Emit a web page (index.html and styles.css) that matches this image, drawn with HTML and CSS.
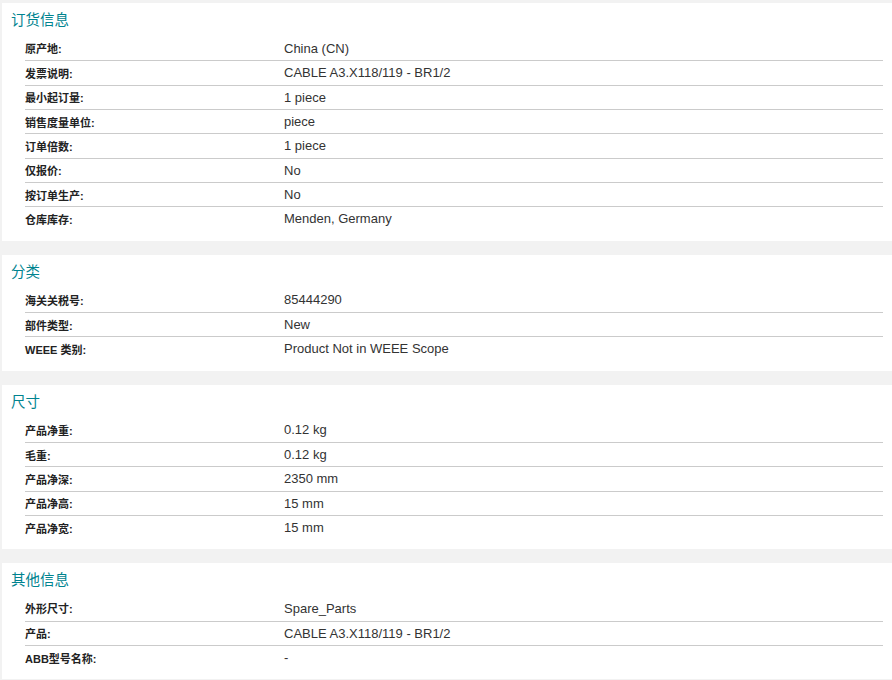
FILE: index.html
```html
<!DOCTYPE html>
<html lang="zh">
<head>
<meta charset="utf-8">
<link rel="stylesheet" href="styles.css">
</head>
<body>
<section class="card">
  <h2 class="card-title">订货信息</h2>
  <div class="rows">
    <div class="row"><span class="label">原产地:</span><span class="value">China (CN)</span></div>
    <div class="row"><span class="label">发票说明:</span><span class="value">CABLE A3.X118/119 - BR1/2</span></div>
    <div class="row"><span class="label">最小起订量:</span><span class="value">1 piece</span></div>
    <div class="row"><span class="label">销售度量单位:</span><span class="value">piece</span></div>
    <div class="row"><span class="label">订单倍数:</span><span class="value">1 piece</span></div>
    <div class="row"><span class="label">仅报价:</span><span class="value">No</span></div>
    <div class="row"><span class="label">按订单生产:</span><span class="value">No</span></div>
    <div class="row"><span class="label">仓库库存:</span><span class="value">Menden, Germany</span></div>
  </div>
</section>
<section class="card">
  <h2 class="card-title">分类</h2>
  <div class="rows">
    <div class="row"><span class="label">海关关税号:</span><span class="value">85444290</span></div>
    <div class="row"><span class="label">部件类型:</span><span class="value">New</span></div>
    <div class="row"><span class="label">WEEE 类别:</span><span class="value">Product Not in WEEE Scope</span></div>
  </div>
</section>
<section class="card">
  <h2 class="card-title">尺寸</h2>
  <div class="rows">
    <div class="row"><span class="label">产品净重:</span><span class="value">0.12 kg</span></div>
    <div class="row"><span class="label">毛重:</span><span class="value">0.12 kg</span></div>
    <div class="row"><span class="label">产品净深:</span><span class="value">2350 mm</span></div>
    <div class="row"><span class="label">产品净高:</span><span class="value">15 mm</span></div>
    <div class="row"><span class="label">产品净宽:</span><span class="value">15 mm</span></div>
  </div>
</section>
<section class="card">
  <h2 class="card-title">其他信息</h2>
  <div class="rows">
    <div class="row"><span class="label">外形尺寸:</span><span class="value">Spare_Parts</span></div>
    <div class="row"><span class="label">产品:</span><span class="value">CABLE A3.X118/119 - BR1/2</span></div>
    <div class="row"><span class="label">ABB型号名称:</span><span class="value">-</span></div>
  </div>
</section>
</body>
</html>
```

FILE: styles.css
```css
html, body {
  margin: 0;
  padding: 0;
}
body {
  background: #f2f2f2;
  padding: 3px 0 0 2px;
  font-family: "Liberation Sans", Arial, "Noto Sans CJK SC", sans-serif;
  color: #333;
}
.card {
  background: #fff;
  padding: 6px 9px 10px 9px;
  margin-bottom: 14px;
}
.card-title {
  margin: 0 0 5px 0;
  font-family: "Liberation Sans", "Noto Sans CJK SC", sans-serif;
  font-weight: normal;
  font-size: 14.5px;
  line-height: 22px;
  color: #00838f;
}
.rows {
  margin-left: 14px;
}
.row {
  display: grid;
  grid-template-columns: 259px 1fr;
  align-items: center;
  height: 24.33px;
  box-sizing: border-box;
}
.row + .row {
  border-top: 1px solid #cbcbcb;
}
.label {
  font-family: "Liberation Sans", "Noto Sans CJK SC", sans-serif;
  font-weight: bold;
  font-size: 11px;
  color: #222;
}
.value {
  font-size: 13px;
  color: #333;
}
```
